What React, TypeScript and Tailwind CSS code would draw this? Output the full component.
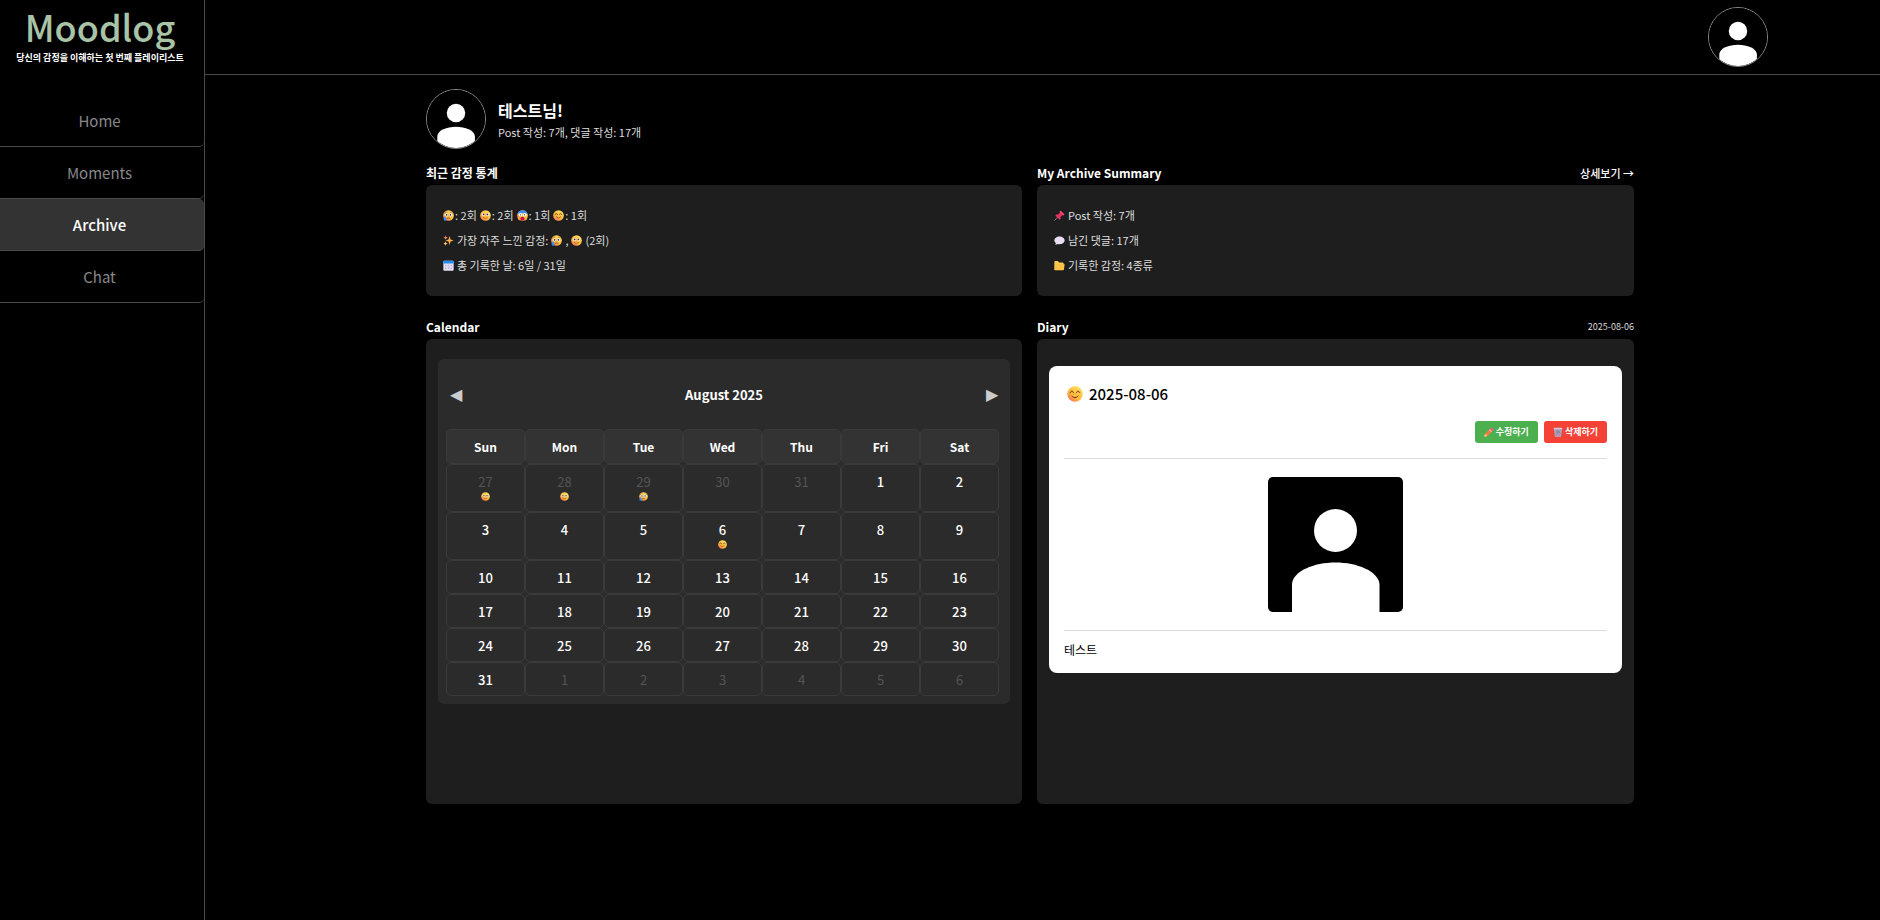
import type { ReactNode } from "react";

type Mood = "sad" | "smile" | "scream" | "happy";

function Face({ mood, className }: { mood: Mood; className: string }) {
  const id = `face-${mood}`;
  return (
    <svg viewBox="0 0 32 32" className={className} role="img" aria-label={mood}>
      <defs>
        <linearGradient id={id} x1="0.85" y1="0.05" x2="0.15" y2="0.95">
          <stop offset="0" stopColor="#ffe35a" />
          <stop offset="0.65" stopColor="#ffb43a" />
          <stop offset="1" stopColor="#f5705f" />
        </linearGradient>
      </defs>
      <circle cx="16" cy="16" r="15.5" fill={`url(#${id})`} />
      {mood === "happy" && (
        <g fill="none" stroke="#5a3030" strokeWidth="2" strokeLinecap="round">
          <path d="M6.500 13.500C7.500 9 12 9 13 13.500" />
          <path d="M19 13.500C20 9 24.500 9 25.500 13.500" />
          <path d="M10 20C13 24.500 19 24.500 22 20" />
        </g>
      )}
      {mood === "smile" && (
        <g>
          <circle cx="10" cy="13" r="4.500" fill="#fff" />
          <circle cx="22" cy="13" r="4.500" fill="#fff" />
          <circle cx="10.500" cy="13" r="2.600" fill="#402a32" />
          <circle cx="21.500" cy="13" r="2.600" fill="#402a32" />
          <path d="M10 22C13 25 19 25 22 22" fill="none" stroke="#8a4a30" strokeWidth="2" strokeLinecap="round" />
        </g>
      )}
      {mood === "sad" && (
        <g>
          <path d="M5 9L11 6M21 6L27 9" stroke="#9a5030" strokeWidth="1.800" strokeLinecap="round" />
          <circle cx="10" cy="14" r="4.800" fill="#fff" />
          <circle cx="22" cy="14" r="4.800" fill="#fff" />
          <circle cx="10.500" cy="14" r="2.600" fill="#402a32" />
          <circle cx="21.500" cy="14" r="2.600" fill="#402a32" />
          <path d="M12 25C14 22 19 22 21 25" fill="none" stroke="#5a3030" strokeWidth="2" strokeLinecap="round" />
          <path d="M6 18C3 22 1 25 2 28C3 32 9 32 10 28C10.500 25 8 21 6 18Z" fill="#3c8bf0" />
        </g>
      )}
      {mood === "scream" && (
        <g>
          <path d="M1 12A15.500 15.500 0 0 1 31 12C24 9 8 9 1 12Z" fill="#3f8cf5" />
          <circle cx="10" cy="14" r="5" fill="#fff" />
          <circle cx="22" cy="14" r="5" fill="#fff" />
          <circle cx="10" cy="14" r="1.800" fill="#402a32" />
          <circle cx="22" cy="14" r="1.800" fill="#402a32" />
          <ellipse cx="16" cy="25" rx="6" ry="5.500" fill="#c3114f" />
          <path d="M2 20C5 21 8 25 8 31L3 27Z M30 20C27 21 24 25 24 31L29 27Z" fill="#ffab2e" />
        </g>
      )}
    </svg>
  );
}

function Sparkles() {
  return (
    <svg viewBox="0 0 32 32" className="inline-block size-[11px] shrink-0" aria-hidden="true">
      <path d="M19 3L22 13L31 16L22 19L19 29L16 19L7 16L16 13Z" fill="#fdb04c" />
      <path d="M8 1L9.500 6L14 8L9.500 10L8 14L6 10L1 8L6 6Z" fill="#ff8a5c" />
      <path d="M7 18L9 23L14 25L9 27L7 31L5 27L1 25L5 23Z" fill="#ffc860" />
    </svg>
  );
}

function CalendarIcon() {
  return (
    <svg viewBox="0 0 32 32" className="inline-block size-[11px] shrink-0" aria-hidden="true">
      <rect x="1" y="2" width="30" height="29" rx="3" fill="#e6e0f4" />
      <path d="M1 10V5A3 3 0 0 1 4 2H28A3 3 0 0 1 31 5V10Z" fill="#1f8cf0" />
      <path
        d="M6 14H10V18H6ZM14 14H18V18H14ZM22 14H26V18H22ZM6 22H10V26H6ZM14 22H18V26H14ZM22 22H26V26H22Z"
        fill="#b7a8d6"
      />
    </svg>
  );
}

function Pin() {
  return (
    <svg viewBox="0 0 32 32" className="inline-block size-[11px] shrink-0" aria-hidden="true">
      <path d="M11 20L1 31" stroke="#8e8a99" strokeWidth="2.500" />
      <path d="M19 2L30 13L27 16L24 15L19 20L19 26L16 28L4 16L6 13L12 13L17 8L16 5Z" fill="#e8325f" />
      <path d="M19 2L30 13L28 15L17 4Z" fill="#ff5c7c" />
    </svg>
  );
}

function Bubble() {
  return (
    <svg viewBox="0 0 32 32" className="inline-block size-[11px] shrink-0" aria-hidden="true">
      <path
        d="M16 4C24.500 4 31 9 31 15.500S24.500 27 16 27C14 27 12 26.700 10 26L4 29L5.500 23.500C2.500 21.500 1 18.500 1 15.500C1 9 7.500 4 16 4Z"
        fill="#e9def5"
      />
    </svg>
  );
}

function Folder() {
  return (
    <svg viewBox="0 0 32 32" className="inline-block size-[11px] shrink-0" aria-hidden="true">
      <path d="M1 6A3 3 0 0 1 4 3H11L15 7H25A3 3 0 0 1 28 10V28H1Z" fill="#ffca52" />
      <path d="M1 29L5 14A3 3 0 0 1 8 12H31L29 27A3 3 0 0 1 26 30H3Z" fill="#ffc244" />
    </svg>
  );
}

function Pencil() {
  return (
    <svg viewBox="0 0 32 32" className="size-[10px] shrink-0" aria-hidden="true">
      <path d="M3 22L20 5L28 12L11 29L1 31Z" fill="#ff7a3c" />
      <path d="M18 7L22 3C25 1 31 7 29 10L25 14Z" fill="#ff5a86" />
      <path d="M16 9L18 7L25 14L23 16Z" fill="#d8d4e0" />
      <path d="M3 22L11 29L1 31Z" fill="#ffd09a" />
    </svg>
  );
}

function Trash() {
  return (
    <svg viewBox="0 0 32 32" className="size-[10px] shrink-0" aria-hidden="true">
      <path d="M3 6H29L26 31H6Z" fill="#b3a8c2" />
      <path d="M8 10L22 28M14 10L25 22M24 10L9 28M18 10L7 22" stroke="#776e8a" strokeWidth="1.800" />
      <rect x="2" y="2" width="28" height="5" rx="2" fill="#cdc4da" />
    </svg>
  );
}

function Portrait({ className }: { className: string }) {
  return (
    <svg viewBox="0 0 135 135" className={className} role="img" aria-label="프로필">
      <rect width="135" height="135" fill="#000" />
      <circle cx="67.5" cy="53.500" r="21.500" fill="#fff" />
      <path d="M24 135V107C25 94 46 85.500 67.500 85.500S110 94 111.500 107V135Z" fill="#fff" />
    </svg>
  );
}

const NAV = ["Home", "Moments", "Archive", "Chat"];

const DAYS = ["Sun", "Mon", "Tue", "Wed", "Thu", "Fri", "Sat"];

type Day = { n: number; out?: boolean; mood?: Mood };

const WEEKS: Day[][] = [
  [
    { n: 27, out: true, mood: "smile" },
    { n: 28, out: true, mood: "smile" },
    { n: 29, out: true, mood: "sad" },
    { n: 30, out: true },
    { n: 31, out: true },
    { n: 1 },
    { n: 2 },
  ],
  [{ n: 3 }, { n: 4 }, { n: 5 }, { n: 6, mood: "happy" }, { n: 7 }, { n: 8 }, { n: 9 }],
  [10, 11, 12, 13, 14, 15, 16].map((n) => ({ n })),
  [17, 18, 19, 20, 21, 22, 23].map((n) => ({ n })),
  [24, 25, 26, 27, 28, 29, 30].map((n) => ({ n })),
  [{ n: 31 }, ...[1, 2, 3, 4, 5, 6].map((n) => ({ n, out: true }))],
];

function Sidebar() {
  return (
    <aside className="w-[205px] shrink-0 border-r border-[#4a4a4a]">
      <div className="flex h-[95px] flex-col items-center pr-1 pt-[2px] text-center">
        <h1 className="text-[36px] leading-[48px] font-medium text-[#a8c3a5]">Moodlog</h1>
        <p className="text-[9px] leading-4 font-bold whitespace-nowrap text-white">
          당신의 감정을 이해하는 첫 번째 플레이리스트
        </p>
      </div>
      <nav>
        {NAV.map((label) => (
          <a
            key={label}
            href={`#${label.toLowerCase()}`}
            aria-current={label === "Archive" ? "page" : undefined}
            className={
              "flex h-[52px] items-center justify-center rounded-r-[5px] border-b border-[#4a4a4a] pt-[2px] pr-[5px] text-[15px] " +
              (label === "Archive" ? "bg-[#333] font-medium text-white" : "text-[#888]")
            }
          >
            {label}
          </a>
        ))}
      </nav>
    </aside>
  );
}

function Section({ title, side, children }: { title: string; side?: ReactNode; children: ReactNode }) {
  return (
    <section className="flex flex-col">
      <div className="flex h-6 items-center justify-between">
        <h2 className="text-[12px] leading-5 font-bold text-white">{title}</h2>
        {side}
      </div>
      {children}
    </section>
  );
}

function SummaryPanel({ children }: { children: ReactNode }) {
  return (
    <div className="h-[111px] rounded-md bg-[#1e1e1e] px-[17px] py-[18px] text-[11px] text-[#ddd]">
      <ul className="[&>li]:flex [&>li]:h-[25px] [&>li]:items-center [&>li]:gap-[3px]">{children}</ul>
    </div>
  );
}

function MoodCount({ mood, count }: { mood: Mood; count: number }) {
  return (
    <span className="flex items-center gap-px">
      <Face mood={mood} className="size-[11px]" />
      <span>: {count}회</span>
    </span>
  );
}

function CalendarCard() {
  return (
    <div className="rounded-md bg-[#2b2b2b] pt-[1px] pr-[11px] pb-2 pl-2">
      <div className="flex h-[69px] items-center justify-between pr-px pl-1">
        <button type="button" aria-label="이전 달" className="w-3 font-['DejaVu_Sans'] text-[16px] leading-5 text-[#ccc]">
          ◀
        </button>
        <h3 className="text-[13px] leading-5 font-bold text-white">August 2025</h3>
        <button type="button" aria-label="다음 달" className="w-3 font-['DejaVu_Sans'] text-[16px] leading-5 text-[#ccc]">
          ▶
        </button>
      </div>
      <table className="w-full table-fixed border-separate border-spacing-0 text-center">
        <thead>
          <tr>
            {DAYS.map((d) => (
              <th
                key={d}
                scope="col"
                className="h-[35px] rounded-[5px] border border-[#3a3a3a] bg-[#333] p-0 pt-px text-[12px] leading-[18px] font-bold text-white"
              >
                {d}
              </th>
            ))}
          </tr>
        </thead>
        <tbody>
          {WEEKS.map((week, i) => (
            <tr key={i}>
              {week.map((day) => (
                <td
                  key={day.n}
                  className={
                    "rounded-[5px] border border-[#3a3a3a] px-0 pt-2 pb-[6px] align-top text-[13px] leading-[18px] " +
                    (day.out ? "text-[#555]" : "font-medium text-white")
                  }
                >
                  {day.n}
                  {day.mood && (
                    <div className="flex h-[14px] items-center justify-center pb-[3px]">
                      <Face mood={day.mood} className="size-[9px]" />
                    </div>
                  )}
                </td>
              ))}
            </tr>
          ))}
        </tbody>
      </table>
    </div>
  );
}

function DiaryCard() {
  return (
    <article className="rounded-lg bg-white px-[15px] pt-4 pb-[13px] text-black">
      <h3 className="flex h-6 items-center gap-[6px] pl-[3px] text-[15px] font-medium">
        <Face mood="happy" className="size-4" />
        2025-08-06
      </h3>
      <div className="mt-[15px] flex justify-end gap-[6px] text-[9px] font-bold text-white">
        <button type="button" className="flex h-[22px] items-center gap-[2px] rounded-[3px] bg-[#4caf50] px-[9px]">
          <Pencil />
          수정하기
        </button>
        <button type="button" className="flex h-[22px] items-center gap-[2px] rounded-[3px] bg-[#f44336] px-[9px]">
          <Trash />
          삭제하기
        </button>
      </div>
      <div className="mt-[15px] flex justify-center border-y border-[#ddd] py-[18px]">
        <Portrait className="size-[135px] rounded-[5px]" />
      </div>
      <p className="mt-2 text-[12px] leading-[21px]">테스트</p>
    </article>
  );
}

export default function App() {
  return (
    <div className="flex min-h-screen bg-black font-['Noto_Sans_CJK_KR','Noto_Sans_KR',sans-serif] text-white">
      <Sidebar />
      <div className="flex-1">
        <header className="flex h-[75px] items-center justify-end border-b border-[#4a4a4a] pr-28">
          <button type="button" aria-label="내 프로필" className="size-[60px] overflow-hidden rounded-full border border-[#888]">
            <Portrait className="size-full" />
          </button>
        </header>
        <main className="pt-[14px] pr-[246px] pl-[221px]">
          <div className="flex items-center gap-3">
            <div className="size-[60px] overflow-hidden rounded-full border border-[#888]">
              <Portrait className="size-full" />
            </div>
            <div className="pt-[2px]">
              <p className="text-[16px] leading-6 font-bold">테스트님!</p>
              <p className="text-[11px] leading-5 text-[#ddd]">Post 작성: 7개, 댓글 작성: 17개</p>
            </div>
          </div>
          <div className="mt-3 grid grid-cols-[596fr_597fr] gap-x-[15px] gap-y-[19px]">
            <Section title="최근 감정 통계">
              <SummaryPanel>
                <li>
                  <MoodCount mood="sad" count={2} />
                  <MoodCount mood="smile" count={2} />
                  <MoodCount mood="scream" count={1} />
                  <MoodCount mood="happy" count={1} />
                </li>
                <li>
                  <Sparkles />
                  <span>가장 자주 느낀 감정:</span>
                  <Face mood="sad" className="size-[11px]" />
                  <span>,</span>
                  <Face mood="smile" className="size-[11px]" />
                  <span>(2회)</span>
                </li>
                <li>
                  <CalendarIcon />
                  <span>총 기록한 날: 6일 / 31일</span>
                </li>
              </SummaryPanel>
            </Section>
            <Section
              title="My Archive Summary"
              side={
                <a href="#detail" className="text-[11px] leading-5 font-medium">
                  상세보기 →
                </a>
              }
            >
              <SummaryPanel>
                <li>
                  <Pin />
                  <span>Post 작성: 7개</span>
                </li>
                <li>
                  <Bubble />
                  <span>남긴 댓글: 17개</span>
                </li>
                <li>
                  <Folder />
                  <span>기록한 감정: 4종류</span>
                </li>
              </SummaryPanel>
            </Section>
            <Section title="Calendar">
              <div className="min-h-[465px] rounded-md bg-[#1e1e1e] px-3 pt-5">
                <CalendarCard />
              </div>
            </Section>
            <Section title="Diary" side={<span className="text-[9px] leading-4 text-[#ddd]">2025-08-06</span>}>
              <div className="min-h-[465px] rounded-md bg-[#1e1e1e] px-3 pt-[27px]">
                <DiaryCard />
              </div>
            </Section>
          </div>
        </main>
      </div>
    </div>
  );
}
